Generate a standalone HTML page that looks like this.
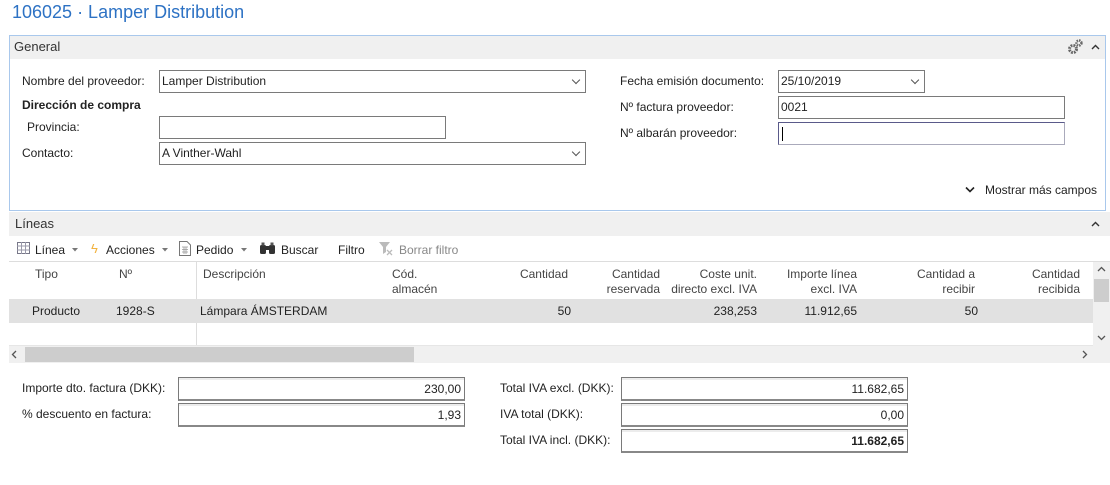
<!DOCTYPE html>
<html><head><meta charset="utf-8"><style>
*{box-sizing:border-box;margin:0;padding:0}
body{width:1110px;height:485px;background:#fff;font-family:"Liberation Sans",sans-serif;font-size:12px;color:#222;position:relative;overflow:hidden}
.a{position:absolute;white-space:nowrap}
.inp{position:absolute;border:1px solid #7a7a7a;background:#fff;height:23px;line-height:21px;padding-left:2px}
.dd::after{content:"";position:absolute;right:6px;top:6px;width:5px;height:5px;border-right:1px solid #555;border-bottom:1px solid #555;transform:rotate(45deg)}
.tot{position:absolute;border:1px solid #7a7a7a;border-bottom:2px solid #888;box-shadow:inset 0 2px 0 #ececec;height:24px;line-height:22px;text-align:right;padding-right:3px}
.r{text-align:right}
.hd{color:#444}
</style></head><body>
<div class="a" style="left:12px;top:2px;font-size:18px;color:#2d72c4">106025 · Lamper Distribution</div>

<div class="a" style="left:9px;top:35px;width:1097px;height:176px;border:1px solid #a9c8ec"></div>
<div class="a" style="left:10px;top:36px;width:1095px;height:23px;background:#f0f0f0"></div>
<div class="a" style="left:14px;top:39px;font-size:13px;color:#333">General</div>
<svg class="a" style="left:1066px;top:38px" width="20" height="18" viewBox="0 0 20 18"><circle cx="7" cy="11" r="3.5" fill="none" stroke="#666" stroke-width="3" stroke-dasharray="1.8 1"/><circle cx="13" cy="5" r="2.5" fill="none" stroke="#666" stroke-width="2.4" stroke-dasharray="1.4 .9"/></svg>
<svg class="a" style="left:1091px;top:44px" width="9" height="6"><path d="M1 5L4.5 1.5L8 5" fill="none" stroke="#333" stroke-width="1.4"/></svg>

<div class="a" style="left:22px;top:74px">Nombre del proveedor:</div>
<div class="inp dd" style="left:159px;top:70px;width:427px">Lamper Distribution</div>
<div class="a" style="left:22px;top:98px;font-weight:bold">Dirección de compra</div>
<div class="a" style="left:27px;top:120px">Provincia:</div>
<div class="inp" style="left:159px;top:116px;width:287px"></div>
<div class="a" style="left:22px;top:146px">Contacto:</div>
<div class="inp dd" style="left:159px;top:142px;width:427px">A Vinther-Wahl</div>

<div class="a" style="left:620px;top:74px">Fecha emisión documento:</div>
<div class="inp dd" style="left:778px;top:70px;width:147px">25/10/2019</div>
<div class="a" style="left:620px;top:100px">Nº factura proveedor:</div>
<div class="inp" style="left:778px;top:96px;width:287px">0021</div>
<div class="a" style="left:620px;top:126px">Nº albarán proveedor:</div>
<div class="inp" style="left:778px;top:122px;width:287px;border-color:#5a5a8a #aab #aab #5a5a8a"><span style="display:inline-block;width:1px;height:14px;background:#000;vertical-align:middle;margin-left:1px"></span></div>
<svg class="a" style="left:965px;top:186px" width="10" height="8"><path d="M1 1.5L5 5.5L9 1.5" fill="none" stroke="#222" stroke-width="1.6"/></svg>
<div class="a" style="left:985px;top:183px">Mostrar más campos</div>

<div class="a" style="left:9px;top:212px;width:1101px;height:24px;background:#f0f0f0"></div>
<div class="a" style="left:15px;top:216px;font-size:13px;color:#333">Líneas</div>
<svg class="a" style="left:1091px;top:221px" width="9" height="6"><path d="M1 5L4.5 1.5L8 5" fill="none" stroke="#333" stroke-width="1.4"/></svg>

<svg class="a" style="left:17px;top:242px" width="13" height="12"><rect x="0.5" y="0.5" width="12" height="11" fill="#fff" stroke="#778"/><path d="M0 4H13M0 8H13M4.5 0V12M8.5 0V12" stroke="#99a"/></svg>
<div class="a" style="left:35px;top:243px">Línea</div><svg class="a" style="left:72px;top:248px" width="6" height="4"><path d="M0 0H6L3 3.5Z" fill="#777"/></svg>
<div class="a" style="left:91px;top:241px;color:#f2b340;font-size:13px">ϟ</div>
<div class="a" style="left:106px;top:243px">Acciones</div><svg class="a" style="left:162px;top:248px" width="6" height="4"><path d="M0 0H6L3 3.5Z" fill="#777"/></svg>
<svg class="a" style="left:179px;top:241px" width="12" height="15"><path d="M.5 .5H8L11.5 4V14.5H.5Z" fill="#fff" stroke="#777"/><path d="M3 6H9M3 8.5H9M3 11H9M5 6V13M7 6V13" stroke="#999" stroke-width=".8"/></svg>
<div class="a" style="left:196px;top:243px">Pedido</div><svg class="a" style="left:241px;top:248px" width="6" height="4"><path d="M0 0H6L3 3.5Z" fill="#777"/></svg>
<svg class="a" style="left:259px;top:242px" width="17" height="13"><rect x="1" y="3" width="6" height="9" rx="1.5" fill="#333"/><rect x="10" y="3" width="6" height="9" rx="1.5" fill="#333"/><rect x="6" y="4" width="5" height="4" fill="#333"/><rect x="2.5" y="0.5" width="3" height="3" fill="#555"/><rect x="11.5" y="0.5" width="3" height="3" fill="#555"/></svg>
<div class="a" style="left:281px;top:243px">Buscar</div>
<div class="a" style="left:338px;top:243px">Filtro</div>
<svg class="a" style="left:378px;top:241px" width="16" height="15"><path d="M1 1H12L8 6V11L5 13V6Z" fill="#bbb"/><path d="M9 9L14 14M14 9L9 14" stroke="#bbb" stroke-width="1.3"/></svg>
<div class="a" style="left:399px;top:243px;color:#888">Borrar filtro</div>

<div class="a" style="left:9px;top:261px;width:1101px;height:1px;background:#ddd"></div>
<div class="a" style="left:196px;top:262px;width:1px;height:84px;background:#ddd"></div>
<div class="a hd" style="left:35px;top:267px">Tipo</div>
<div class="a hd" style="left:119px;top:267px">Nº</div>
<div class="a hd" style="left:203px;top:267px">Descripción</div>
<div class="a hd" style="left:392px;top:267px;line-height:15px">Cód.<br>almacén</div>
<div class="a hd r" style="left:468px;width:100px;top:267px">Cantidad</div>
<div class="a hd r" style="left:560px;width:100px;top:267px;line-height:15px">Cantidad<br>reservada</div>
<div class="a hd r" style="left:657px;width:100px;top:267px;line-height:15px">Coste unit.<br>directo excl. IVA</div>
<div class="a hd r" style="left:757px;width:100px;top:267px;line-height:15px">Importe línea<br>excl. IVA</div>
<div class="a hd r" style="left:875px;width:100px;top:267px;line-height:15px">Cantidad a<br>recibir</div>
<div class="a hd r" style="left:980px;width:100px;top:267px;line-height:15px">Cantidad<br>recibida</div>

<div class="a" style="left:9px;top:299px;width:1084px;height:24px;background:#e1e1e1"></div>
<div class="a" style="left:32px;top:304px">Producto</div>
<div class="a" style="left:116px;top:304px">1928-S</div>
<div class="a" style="left:200px;top:304px">Lámpara ÁMSTERDAM</div>
<div class="a r" style="left:471px;width:100px;top:304px">50</div>
<div class="a r" style="left:657px;width:100px;top:304px">238,253</div>
<div class="a r" style="left:757px;width:100px;top:304px">11.912,65</div>
<div class="a r" style="left:878px;width:100px;top:304px">50</div>
<div class="a" style="left:9px;top:345px;width:1084px;height:1px;background:#e6e6e6"></div>

<div class="a" style="left:1093px;top:262px;width:17px;height:84px;background:#f0f0f0"></div>
<div class="a" style="left:1094px;top:279px;width:15px;height:23px;background:#cdcdcd"></div>
<svg class="a" style="left:1097px;top:266px" width="9" height="6"><path d="M1 5L4.5 1.5L8 5" fill="none" stroke="#555" stroke-width="1.3"/></svg>
<svg class="a" style="left:1097px;top:335px" width="9" height="6"><path d="M1 1L4.5 4.5L8 1" fill="none" stroke="#555" stroke-width="1.3"/></svg>
<div class="a" style="left:9px;top:346px;width:1101px;height:17px;background:#f0f0f0"></div>
<div class="a" style="left:25px;top:347px;width:389px;height:15px;background:#cdcdcd"></div>
<svg class="a" style="left:11px;top:350px" width="6" height="9"><path d="M5 1L1.5 4.5L5 8" fill="none" stroke="#555" stroke-width="1.3"/></svg>
<svg class="a" style="left:1082px;top:350px" width="6" height="9"><path d="M1 1L4.5 4.5L1 8" fill="none" stroke="#555" stroke-width="1.3"/></svg>

<div class="a" style="left:22px;top:381px">Importe dto. factura (DKK):</div>
<div class="tot" style="left:178px;top:377px;width:287px">230,00</div>
<div class="a" style="left:22px;top:407px">% descuento en factura:</div>
<div class="tot" style="left:178px;top:403px;width:287px">1,93</div>
<div class="a" style="left:500px;top:381px">Total IVA excl. (DKK):</div>
<div class="tot" style="left:621px;top:377px;width:287px">11.682,65</div>
<div class="a" style="left:500px;top:407px">IVA total (DKK):</div>
<div class="tot" style="left:621px;top:403px;width:287px">0,00</div>
<div class="a" style="left:500px;top:433px">Total IVA incl. (DKK):</div>
<div class="tot" style="left:621px;top:429px;width:287px;font-weight:bold">11.682,65</div>
</body></html>
